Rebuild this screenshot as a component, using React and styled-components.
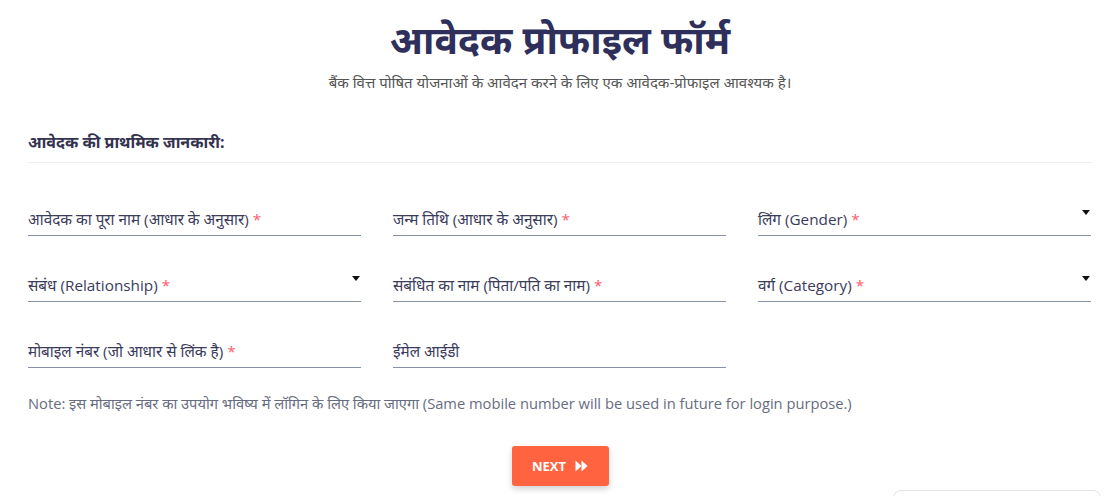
import React from "react";
import styled, { createGlobalStyle } from "styled-components";

const Global = createGlobalStyle`
  html, body { margin: 0; padding: 0; background: #fff; }
  body { font-family: "Open Sans", "Noto Sans", sans-serif; }
  * { box-sizing: border-box; }
`;

const Page = styled.div`
  width: 1112px;
  height: 496px;
  overflow: hidden;
  position: relative;
  padding: 0 20px 0 28px;
`;

const Header = styled.header`
  display: flex;
  flex-direction: column;
  align-items: center;
  padding-top: 13px;
`;

const Title = styled.h1`
  margin: 0;
  font-size: 39px;
  line-height: 52px;
  font-weight: 700;
  color: #2f2f5b;
`;

const Subtitle = styled.p`
  margin: 7px 0 0;
  font-size: 15px;
  line-height: 20px;
  color: #555;
`;

const SectionTitle = styled.h2`
  margin: 40px 0 0;
  font-size: 16px;
  line-height: 20px;
  font-weight: 700;
  color: #33334f;
  padding-bottom: 10px;
  border-bottom: 1px solid #eeeeee;
`;

const Grid = styled.div`
  display: grid;
  grid-template-columns: repeat(3, 333px);
  column-gap: 32px;
  row-gap: 30px;
  margin-top: 37px;
`;

const Field = styled.div`
  position: relative;
  height: 36px;
  border-bottom: 1px solid #8892a6;
  display: flex;
  align-items: flex-end;
  padding-bottom: 5px;
`;

const Label = styled.span`
  font-size: 15.3px;
  line-height: 22px;
  color: #3b3b5c;
`;

const Star = styled.span`
  color: #ff5a6e;
  margin-left: 4px;
`;

const Caret = styled.span`
  position: absolute;
  right: 1px;
  top: 10px;
  width: 0;
  height: 0;
  border-left: 4px solid transparent;
  border-right: 4px solid transparent;
  border-top: 5px solid #111;
`;

const Note = styled.p`
  margin: 25px 0 0;
  font-size: 14.7px;
  line-height: 20px;
  color: #676d80;
`;

const Actions = styled.div`
  display: flex;
  justify-content: center;
  margin-top: 33px;
`;

const NextButton = styled.button`
  width: 97px;
  height: 40px;
  border: none;
  border-radius: 3px;
  background: #ff6340;
  color: #fff;
  font-family: "Open Sans", sans-serif;
  font-weight: 700;
  font-size: 13px;
  display: flex;
  align-items: center;
  justify-content: center;
  gap: 9px;
  padding-left: 6px;
  box-shadow: 0 3px 6px rgba(0, 0, 0, 0.18);
  cursor: pointer;
`;

const Widget = styled.div`
  position: absolute;
  left: 893px;
  top: 490px;
  width: 208px;
  height: 30px;
  border: 1px solid #e4e4e4;
  border-radius: 8px;
  background: #fff;
`;

const fields = [
  { label: "आवेदक का पूरा नाम (आधार के अनुसार)", req: true },
  { label: "जन्म तिथि (आधार के अनुसार)", req: true },
  { label: "लिंग (Gender)", req: true, select: true },
  { label: "संबंध (Relationship)", req: true, select: true },
  { label: "संबंधित का नाम (पिता/पति का नाम)", req: true },
  { label: "वर्ग (Category)", req: true, select: true },
  { label: "मोबाइल नंबर (जो आधार से लिंक है)", req: true },
  { label: "ईमेल आईडी", req: false },
];

const FastForward = () => (
  <svg width="13" height="12" viewBox="0 0 13 12" fill="#fff">
    <path d="M0.5 0.5 L6.5 6 L0.5 11.5 Z" />
    <path d="M6.5 0.5 L12.5 6 L6.5 11.5 Z" />
  </svg>
);

export default function App() {
  return (
    <>
      <Global />
      <Page>
        <Header>
          <Title>आवेदक प्रोफाइल फॉर्म</Title>
          <Subtitle>बैंक वित्त पोषित योजनाओं के आवेदन करने के लिए एक आवेदक-प्रोफाइल आवश्यक है।</Subtitle>
        </Header>
        <SectionTitle>आवेदक की प्राथमिक जानकारी:</SectionTitle>
        <Grid>
          {fields.map((f) => (
            <Field key={f.label}>
              <Label>
                {f.label}
                {f.req && <Star>*</Star>}
              </Label>
              {f.select && <Caret />}
            </Field>
          ))}
        </Grid>
        <Note>
          Note: इस मोबाइल नंबर का उपयोग भविष्य में लॉगिन के लिए किया जाएगा (Same mobile number will be used in future for login purpose.)
        </Note>
        <Actions>
          <NextButton>
            NEXT <FastForward />
          </NextButton>
        </Actions>
        <Widget />
      </Page>
    </>
  );
}
